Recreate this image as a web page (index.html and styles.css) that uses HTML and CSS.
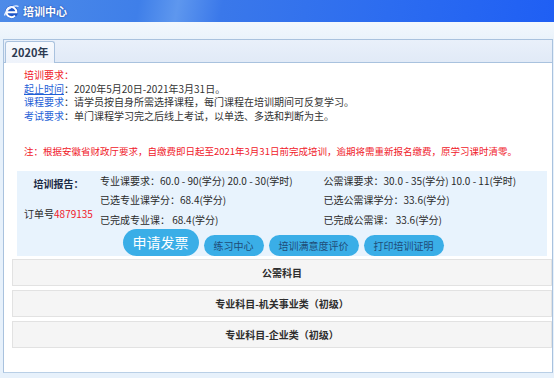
FILE: index.html
```html
<!DOCTYPE html>
<html lang="zh">
<head>
<meta charset="utf-8">
<link rel="stylesheet" href="styles.css">
</head>
<body>
<header class="top">
  <svg class="logo" width="17" height="17" viewBox="0 0 17 17">
    <circle cx="8.5" cy="9" r="6.5" fill="#1f57c8"/>
    <path d="M3.5 9.2 H13.4 A5 5 0 1 0 12 12.6" fill="none" stroke="#fff" stroke-width="2"/>
    <path d="M1.5 12.5 C 4 5, 12 1.5, 15.5 3.5" fill="none" stroke="#e8f0ff" stroke-width="1.3"/>
  </svg>
  <span class="title">培训中心</span>
</header>
<div class="spacer"></div>
<div class="panel">
  <div class="tabs"><div class="tab">2020年</div></div>
  <div class="body">
    <div class="req">
      <div class="red">培训要求：</div>
      <div><span class="lbl ul">起止时间</span>：2020年5月20日-2021年3月31日。</div>
      <div><span class="lbl">课程要求</span>：请学员按自身所需选择课程，每门课程在培训期间可反复学习。</div>
      <div><span class="lbl">考试要求</span>：单门课程学习完之后线上考试，以单选、多选和判断为主。</div>
    </div>
    <div class="note">注：根据安徽省财政厅要求，自缴费即日起至2021年3月31日前完成培训，逾期将需重新报名缴费，原学习课时清零。</div>
    <div class="report">
      <div class="side">
        <div class="rtitle">培训报告：</div>
        <div class="order">订单号<span class="num">4879135</span></div>
      </div>
      <div class="col">
        <div>专业课要求：60.0 - 90(学分) 20.0 - 30(学时)</div>
        <div>已选专业课学分：68.4(学分)</div>
        <div>已完成专业课：&nbsp;68.4(学分)</div>
      </div>
      <div class="col">
        <div>公需课要求：30.0 - 35(学分) 10.0 - 11(学时)</div>
        <div>已选公需课学分：33.6(学分)</div>
        <div>已完成公需课：&nbsp;33.6(学分)</div>
      </div>
      <div class="btns">
        <span class="btn big">申请发票</span>
        <span class="btn">练习中心</span>
        <span class="btn">培训满意度评价</span>
        <span class="btn">打印培训证明</span>
      </div>
    </div>
    <div class="bars">
      <div class="bar">公需科目</div>
      <div class="bar">专业科目-机关事业类（初级）</div>
      <div class="bar">专业科目-企业类（初级）</div>
    </div>
  </div>
</div>
</body>
</html>
```
FILE: styles.css
```css
* { box-sizing: border-box; }
html, body { margin: 0; padding: 0; }
body {
  width: 554px;
  height: 378px;
  overflow: hidden;
  background: #e7f1fb;
  font-family: "Noto Sans CJK SC", "Microsoft YaHei", sans-serif;
  font-size: 10px;
  color: #333;
}
.top {
  height: 22px;
  background: linear-gradient(100deg, #4d8be8 0%, #3f7fe9 25%, #5e97ee 32%, #3a78ea 40%, #2c6cf0 70%, #1f5ff4 100%);
  display: flex;
  align-items: center;
  padding-left: 3px;
  gap: 3px;
}
.logo { display: block; }
.title {
  color: #fff;
  font-weight: bold;
  font-size: 11px;
  text-shadow: 0 0 2px #1d3f9a;
}
.spacer {
  height: 17px;
  background: linear-gradient(#f3f8fd, #eaf3fb);
}
.panel {
  margin: 0 1px 0 3px;
  border: 1px solid #a9c2de;
  border-bottom-color: #b9cfe6;
  background: #fff;
}
.tabs {
  height: 23px;
  background: linear-gradient(#e9f0fa, #e1eaf7);
  border-bottom: 1px solid #a9c2de;
  padding: 1px 0 0 1px;
  display: flex;
}
.tab {
  width: 50px;
  height: 22px;
  border: 1px solid #a9c2de;
  border-bottom: none;
  border-radius: 3px 3px 0 0;
  background: linear-gradient(#f6f9fd, #eef3fb);
  font-size: 11px;
  font-weight: bold;
  color: #2d3b52;
  text-align: center;
  line-height: 21px;
}
.body {
  padding: 5px 0 24px 0;
}
.req {
  padding-left: 20px;
  line-height: 13.7px;
}
.red { color: #f0202a; }
.lbl { color: #1f5fd6; }
.ul { text-decoration: underline; }
.note {
  padding-left: 20px;
  margin-top: 21px;
  line-height: 14px;
  font-size: 9.5px;
  color: #f0202a;
}
.report {
  margin: 13px 5px 0 13px;
  background: #e8f3fd;
  display: grid;
  grid-template-columns: 83px 1fr 1fr;
  line-height: 19.5px;
  color: #2a2a2a;
}
.side {
  display: flex;
  flex-direction: column;
  align-items: center;
  padding-top: 6px;
  line-height: 14px;
}
.rtitle { font-weight: bold; color: #1c2a44; }
.order { margin-top: 16px; }
.num { color: #f0202a; }
.btns {
  grid-column: 1 / 4;
  display: flex;
  justify-content: center;
  align-items: flex-end;
  gap: 5px;
  height: 27px;
  padding-left: 2px;
}
.btn {
  background: #3aaee7;
  border-radius: 11px;
  height: 21px;
  line-height: 21px;
  padding: 0 10px;
  color: #1f4c78;
}
.big {
  height: 27px;
  line-height: 27px;
  border-radius: 14px;
  font-size: 14px;
  color: #fff;
  padding: 0 10px;
}
.bars {
  margin: 3px 0 0 8px;
  display: flex;
  flex-direction: column;
  gap: 4px;
}
.bar {
  height: 27px;
  line-height: 25px;
  border: 1px solid #e2e2e2;
  background: #f5f5f5;
  text-align: center;
  font-weight: bold;
  color: #2e2e2e;
}
```
